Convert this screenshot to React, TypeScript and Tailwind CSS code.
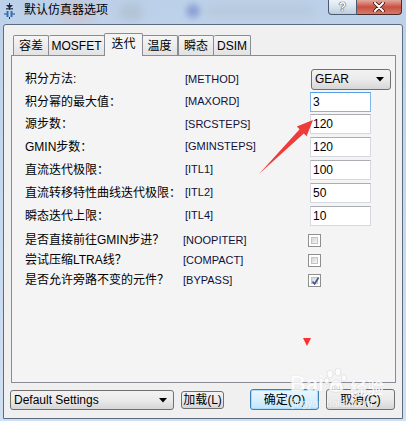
import React from "react";

const Input = ({ value, focus }: { value: string; focus?: boolean }) => (
  <div
    className={
      "w-[61px] h-[20px] bg-white border flex items-center pl-[2px] text-[12px] leading-none text-black " +
      (focus
        ? "border-[#7eb4ea] border-t-[#569de5]"
        : "border-[#d5d9df] border-t-[#abadb3]")
    }
  >
    {value}
  </div>
);

const Check = ({ checked }: { checked?: boolean }) => (
  <div className="ml-[-2px] w-[13px] h-[13px] border border-[#8e8f8f] bg-white p-[2px]">
    <div className="relative w-full h-full border border-[#c4c4c4] bg-linear-to-br from-[#d5d5d5] to-[#f6f6f6]">
      {checked && (
        <svg className="absolute left-[-1px] top-[-2px]" width="9" height="10" viewBox="0 0 9 10">
          <path d="M1.5 5.5 L3.6 8 L7.6 1.5" fill="none" stroke="#3c4f8c" strokeWidth="1.6" />
        </svg>
      )}
    </div>
  </div>
);

const Combo = ({ text, w, h }: { text: string; w: string; h: string }) => (
  <div
    className={
      "flex items-center rounded-[3px] border border-[#707070] bg-linear-to-b from-[#f2f2f2] via-[#ebebeb] to-[#d6d6d6] pl-[3px] pr-[6px] " +
      w +
      " " +
      h
    }
  >
    <span className="text-[12px] leading-none text-black">{text}</span>
    <svg className="ml-auto" width="8" height="5" viewBox="0 0 8 5">
      <path d="M0 0 H8 L4 4.5 Z" fill="#000" />
    </svg>
  </div>
);

type RowProps = {
  label: string;
  tag: string;
  h: string;
  tagShift?: boolean;
  children?: React.ReactNode;
};

const Row = ({ label, tag, h, tagShift, children }: RowProps) => (
  <div className={"flex items-center " + h}>
    <div className="w-[160px] text-[12px] leading-none text-black whitespace-nowrap">{label}</div>
    <div
      className={
        "w-[125px] text-[11px] leading-none text-[#10103a] whitespace-nowrap " +
        (tagShift ? "ml-[-2px] mr-[2px]" : "")
      }
    >
      {tag}
    </div>
    <div className="flex items-center">{children}</div>
  </div>
);

const Tab = ({ label, w, active, extra }: { label: string; w: string; active?: boolean; extra?: string }) => (
  <div
    className={
      "flex items-center justify-center border border-[#898c95] rounded-t-[2px] text-[12px] leading-none text-black " +
      w +
      " " +
      (active
        ? "relative z-10 h-[23px] -mb-px border-b-0 bg-[#f4f4f4] pb-[2px]"
        : "h-[20px] border-b-0 bg-linear-to-b from-[#f6f6f6] to-[#e2e2e2]") +
      " " +
      (extra ?? "")
    }
  >
    {label}
  </div>
);

export default function App() {
  return (
    <div className="relative w-[406px] h-[421px] overflow-hidden bg-linear-to-b from-[#bcd1e9] via-[#c7d9ee] to-[#cfe0f2] font-['Liberation_Sans','Noto_Sans_CJK_SC',sans-serif]">
      {/* blurred background spots in the glass title bar */}
      <div className="absolute left-[58px] top-[2px] w-[36px] h-[20px] rounded-full bg-[#d7b9bd] opacity-60 blur-[6px]" />
      <div className="absolute left-[118px] top-[3px] w-[26px] h-[18px] rounded-full bg-[#a9b6c4] opacity-50 blur-[5px]" />
      <div className="absolute left-[186px] top-[4px] w-[14px] h-[14px] rounded-full bg-[#6f7fc8] opacity-60 blur-[3px]" />
      <div className="absolute left-[205px] top-[5px] w-[110px] h-[12px] rounded-full bg-[#b5c4d6] opacity-60 blur-[4px]" />

      {/* title bar */}
      <div className="relative flex h-[24px]">
        <div className="flex items-start pl-[4px] pt-[3px]">
          <svg width="11" height="16" viewBox="0 0 11 16">
            <path d="M5.5 0 V7" stroke="#1d2a3a" strokeWidth="1" />
            <path d="M2 2 L5.5 5.5 L9 2 Z" fill="#1d2a3a" />
            <path d="M2 5.8 H9" stroke="#1d2a3a" strokeWidth="1.2" />
            <path d="M0 11 H3 M8 11 H11" stroke="#2d4a7a" strokeWidth="1.2" />
            <path d="M3.5 8 V14 M7.5 8 V14" stroke="#2f6fb8" strokeWidth="2" />
            <path d="M5.5 14 V16" stroke="#1d2a3a" strokeWidth="1" />
          </svg>
          <span className="ml-[9px] mt-[1px] text-[12px] leading-none text-black">默认仿真器选项</span>
        </div>
        <div className="ml-auto mr-[4px] flex h-[15px]">
          <div className="w-[29px] h-[15px] border border-[#4b5a6e] border-t-0 rounded-bl-[4px] bg-linear-to-b from-[#eef3f9] via-[#d9e3ef] to-[#bccbdc] flex items-center justify-center">
            <span className="text-[12px] font-bold leading-none text-white [text-shadow:0_0_1px_#1e2838,0_0_1px_#1e2838]">?</span>
          </div>
          <div className="w-[45px] h-[15px] border border-[#4b2a28] border-t-0 border-l-0 rounded-br-[4px] bg-linear-to-b from-[#e3a89f] via-[#c9503f] to-[#d5796a] flex items-center justify-center">
            <svg width="12" height="10" viewBox="0 0 12 10">
              <path d="M2 1 L10 9 M10 1 L2 9" stroke="#3a1612" strokeWidth="3.6" strokeLinecap="round" />
              <path d="M2 1 L10 9 M10 1 L2 9" stroke="#ffffff" strokeWidth="2" strokeLinecap="round" />
            </svg>
          </div>
        </div>
      </div>

      {/* client area */}
      <div className="relative mx-[3px] h-[395px] flex flex-col border border-[#5b6b80] rounded-t-[3px] bg-[#f0f0f0]">
        {/* tabs */}
        <div className="flex items-end h-[30px] pl-[9px] pt-[10px]">
          <Tab label="容差" w="w-[36px]" />
          <Tab label="MOSFET" w="w-[56px]" extra="text-[11px] border-l-0" />
          <Tab label="迭代" w="w-[39px]" active extra="-ml-[1px]" />
          <Tab label="温度" w="w-[36px]" extra="-ml-[1px] border-l-0" />
          <Tab label="瞬态" w="w-[36px]" />
          <Tab label="DSIM" w="w-[37px]" extra="text-[11px] border-l-0" />
        </div>

        {/* panel */}
        <div className="ml-[7px] mr-[6px] h-[328px] border border-[#898c95] border-t-[#898c95] bg-[#f4f4f4] pl-[13px] pt-[12px]">
          <Row label="积分方法:" tag="[METHOD]" h="h-[22px]">
            <div className="ml-[1px]">
              <Combo text="GEAR" w="w-[80px]" h="h-[21px]" />
            </div>
          </Row>
          <Row label="积分幂的最大值：" tag="[MAXORD]" h="h-[23px]">
            <Input value="3" focus />
          </Row>
          <Row label="源步数：" tag="[SRCSTEPS]" h="h-[22px]">
            <Input value="120" />
          </Row>
          <Row label="GMIN步数：" tag="[GMINSTEPS]" h="h-[23px]">
            <Input value="120" />
          </Row>
          <Row label="直流迭代极限：" tag="[ITL1]" h="h-[23px]">
            <Input value="100" />
          </Row>
          <Row label="直流转移特性曲线迭代极限：" tag="[ITL2]" h="h-[23px]">
            <Input value="50" />
          </Row>
          <Row label="瞬态迭代上限：" tag="[ITL4]" h="h-[23px]">
            <Input value="10" />
          </Row>
          <div className="h-[3px]" />
          <Row label="是否直接前往GMIN步进？" tag="[NOOPITER]" h="h-[20px]" tagShift>
            <Check />
          </Row>
          <Row label="尝试压缩LTRA线？" tag="[COMPACT]" h="h-[20px]" tagShift>
            <Check />
          </Row>
          <Row label="是否允许旁路不变的元件？" tag="[BYPASS]" h="h-[20px]" tagShift>
            <Check checked />
          </Row>
        </div>

        {/* bottom buttons */}
        <div className="flex items-start mt-[6px]">
          <div className="ml-[6px] mt-[1px]">
            <Combo text="Default Settings" w="w-[164px]" h="h-[20px]" />
          </div>
          <div className="ml-[7px] mt-[2px] w-[43px] h-[18px] rounded-[3px] border border-[#707070] bg-linear-to-b from-[#f2f2f2] via-[#ebebeb] to-[#d6d6d6] flex items-center justify-center text-[12px] leading-none text-black">
            加载(L)
          </div>
          <div className="ml-[26px] w-[69px] h-[21px] rounded-[3px] border border-[#3c7fb1] bg-linear-to-b from-[#eaf6fd] via-[#d9f0fc] to-[#bee6fd] shadow-[inset_0_0_0_1px_#a8dcf8] flex items-center justify-center text-[12px] leading-none text-black">
            确定(O)
          </div>
          <div className="ml-[7px] w-[69px] h-[21px] rounded-[3px] border border-[#707070] bg-linear-to-b from-[#f2f2f2] via-[#ebebeb] to-[#d6d6d6] flex items-center justify-center text-[12px] leading-none text-black">
            取消(C)
          </div>
        </div>
      </div>

      {/* red annotation arrow */}
      <svg className="absolute left-0 top-0 pointer-events-none" width="406" height="421" viewBox="0 0 406 421">
        <polygon
          points="313,120 306.6,136.3 303.8,133.4 259,174 299.6,129.2 296.8,126.4"
          fill="#f03b3b"
        />
        <polygon points="303,338 311,338 307,346" fill="#ff2e2e" />
      </svg>

      {/* Baidu watermark */}
      <div className="absolute left-[290px] top-[368px] pointer-events-none flex items-end opacity-80">
        <span className="text-[22px] font-bold leading-none text-white [text-shadow:0_0_1px_#c8c8c8]">Bai</span>
        <svg width="24" height="26" viewBox="0 0 24 26" className="mb-[1px]">
          <g fill="#ffffff" stroke="#cfcfcf" strokeWidth="0.6">
            <ellipse cx="6" cy="6" rx="3" ry="4" />
            <ellipse cx="14" cy="4" rx="3" ry="4" />
            <ellipse cx="20" cy="10" rx="2.6" ry="3.4" />
            <ellipse cx="2.8" cy="13" rx="2.4" ry="3.2" />
            <path d="M5 22 C5 15 9 12 12 12 C16 12 20 16 19 22 C18 25 7 25 5 22 Z" />
          </g>
          <text x="12" y="22" textAnchor="middle" fontSize="8" fill="#c8c8c8" fontFamily="Liberation Sans">du</text>
        </svg>
        <span className="ml-[2px] text-[17px] font-bold leading-none text-white [text-shadow:0_0_1px_#c0c0c0] font-['Noto_Sans_CJK_SC',sans-serif]">经验</span>
      </div>
      <div className="absolute left-[292px] top-[399px] pointer-events-none text-[10px] leading-none text-white opacity-70 [text-shadow:0_0_1px_#c8c8c8]">
        jingyan.baidu.com
      </div>
    </div>
  );
}
